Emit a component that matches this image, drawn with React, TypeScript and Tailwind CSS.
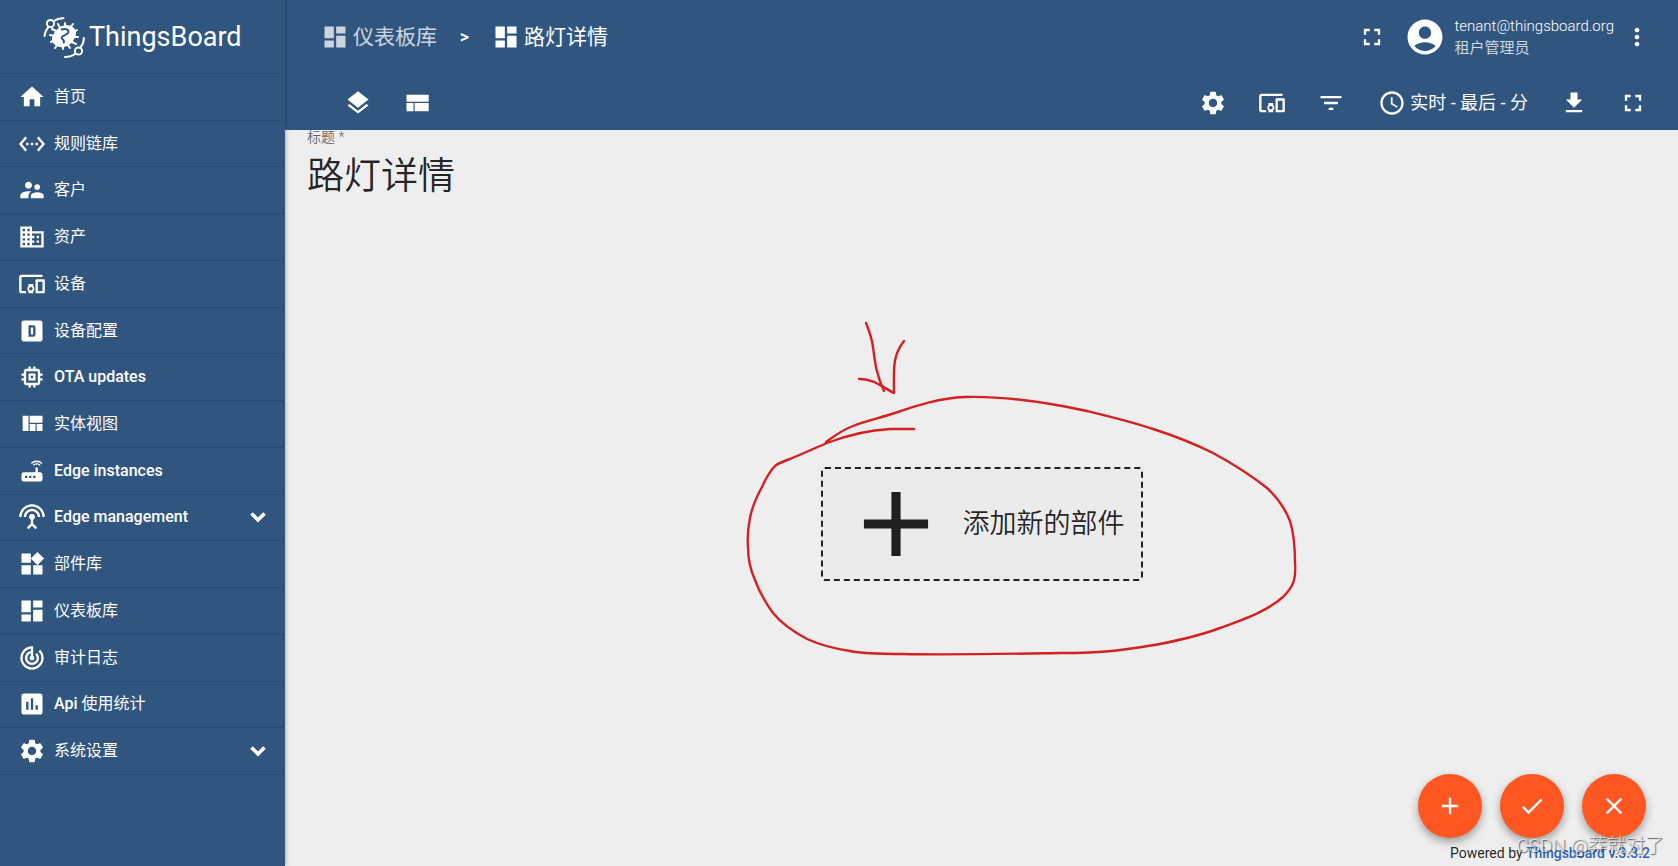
import type { ComponentType, SVGProps } from "react";
import {
  MdAccountCircle,
  MdAdd,
  MdCheck,
  MdClose,
  MdDashboard,
  MdDevicesOther,
  MdDomain,
  MdFileDownload,
  MdFilterList,
  MdFullscreen,
  MdHome,
  MdInsertChart,
  MdLayers,
  MdMemory,
  MdMoreVert,
  MdRouter,
  MdSchedule,
  MdSettings,
  MdSettingsEthernet,
  MdSettingsInputAntenna,
  MdSupervisorAccount,
  MdTrackChanges,
  MdWidgets,
} from "react-icons/md";

type Icon = ComponentType<{ className?: string }>;

const svgProps: SVGProps<SVGSVGElement> = {
  viewBox: "0 0 24 24",
  fill: "currentColor",
  "aria-hidden": true,
};

function DeviceProfileIcon({ className }: { className?: string }) {
  return (
    <svg {...svgProps} className={className}>
      <path d="M9 7v10h4a2 2 0 0 0 2-2V9a2 2 0 0 0-2-2H9m2 2h2v6h-2V9M5 3h14a2 2 0 0 1 2 2v14a2 2 0 0 1-2 2H5a2 2 0 0 1-2-2V5a2 2 0 0 1 2-2z" fillRule="evenodd" />
    </svg>
  );
}

function ViewQuiltIcon({ className }: { className?: string }) {
  return (
    <svg {...svgProps} className={className}>
      <path d="M10 18h5v-6h-5v6zm-6 0h5V5H4v13zm12 0h5v-6h-5v6zM10 5v6h11V5H10z" />
    </svg>
  );
}

function ViewCompactIcon({ className }: { className?: string }) {
  return (
    <svg {...svgProps} className={className}>
      <path d="M3 19h6v-7H3v7zm7 0h12v-7H10v7zM3 5v6h19V5H3z" />
    </svg>
  );
}

function Chevron() {
  return (
    <svg viewBox="0 0 16 12" className="h-3 w-4" fill="none" stroke="currentColor" strokeWidth="3.6" aria-hidden="true">
      <path d="M1.5 2.5 8 9l6.5-6.5" />
    </svg>
  );
}

function Logo() {
  return (
    <svg viewBox="0 0 42 42" className="size-[42px]" fill="none" stroke="currentColor" strokeWidth="2" strokeLinecap="round" aria-hidden="true">
      <circle cx="7.5" cy="7.5" r="3.6" />
      <path d="M10.5 5.2C13.5 3 17 2 20.5 2.200M5.800 10.800C3 13.500 2 17 1.500 20" />
      <circle cx="35.5" cy="35" r="3.6" />
      <path d="M32.500 37.500C29.500 40 26 41 22 41M37.200 31.800C39.500 29 41 25.500 40.800 22" />
      <path d="M23 9c5 0 10 3 10 8s-5 13-12 14-12-3-12-8S16 9 23 9z" fill="currentColor" stroke="none" />
      <path d="M17 12l-2-4M22 11V7M27 12l3-4M31 16l3-2M31 21h4M29 26l4 2M25 29l2 3M20 29v4M15 28l-3 4M12 24l-4 2M11 20l-4-1M13 15l-4-2" />
      <path d="M18.700 13.500c3-1 6.800-.5 6.800 2.500s-6.500 3-6.800 5.500 3.500 2 2 5" stroke="#305680" strokeWidth="2" />
    </svg>
  );
}

const menuItems: { label: string; icon: Icon; expandable?: boolean }[] = [
  { label: "首页", icon: MdHome },
  { label: "规则链库", icon: MdSettingsEthernet },
  { label: "客户", icon: MdSupervisorAccount },
  { label: "资产", icon: MdDomain },
  { label: "设备", icon: MdDevicesOther },
  { label: "设备配置", icon: DeviceProfileIcon },
  { label: "OTA updates", icon: MdMemory },
  { label: "实体视图", icon: ViewQuiltIcon },
  { label: "Edge instances", icon: MdRouter },
  { label: "Edge management", icon: MdSettingsInputAntenna, expandable: true },
  { label: "部件库", icon: MdWidgets },
  { label: "仪表板库", icon: MdDashboard },
  { label: "审计日志", icon: MdTrackChanges },
  { label: "Api 使用统计", icon: MdInsertChart },
  { label: "系统设置", icon: MdSettings, expandable: true },
];

// Latin words are medium, Chinese stays regular
function MenuLabel({ text }: { text: string }) {
  const latin = text.match(/^[A-Za-z ]+/)?.[0] ?? "";
  return (
    <span className="flex-1 whitespace-pre">
      {latin && <span className="font-medium">{latin}</span>}
      {text.slice(latin.length)}
    </span>
  );
}

function Sidebar() {
  return (
    <aside className="z-10 flex w-[285px] shrink-0 flex-col bg-[#305680] shadow-[1px_0_4px_rgba(0,0,0,0.25)]">
      <a href="#" className="flex h-[73px] items-center gap-1 pl-[43px]">
        <Logo />
        <span className="text-[27px] leading-8">ThingsBoard</span>
      </a>
      <nav className="grid h-[702px] auto-rows-fr border-b border-[#294c74]">
        {menuItems.map(({ label, icon: ItemIcon, expandable }) => (
          <a key={label} href="#" className="flex items-center gap-2 border-t border-[#294c74] pr-[19px] pl-[18px] text-base">
            <ItemIcon className="size-7 shrink-0" />
            <MenuLabel text={label} />
            {expandable && <Chevron />}
          </a>
        ))}
      </nav>
    </aside>
  );
}

function IconButton({ label, icon: ButtonIcon }: { label: string; icon: Icon }) {
  return (
    <button type="button" aria-label={label} className="flex w-[59px] items-center justify-center">
      <ButtonIcon className="size-7" />
    </button>
  );
}

function Header() {
  return (
    <header className="bg-[#305680]">
      <div className="flex h-[73px] items-center pr-[27px] pl-9">
        <nav className="flex items-center text-[21px] leading-7">
          <a href="#" className="flex items-center gap-1 opacity-75">
            <MdDashboard className="size-7" />
            仪表板库
          </a>
          <span className="w-[55px] text-center text-lg font-medium">&gt;</span>
          <a href="#" className="flex items-center gap-1">
            <MdDashboard className="size-7" />
            路灯详情
          </a>
        </nav>
        <div className="ml-auto flex items-center">
          <button type="button" aria-label="全屏" className="mr-[18px]">
            <MdFullscreen className="size-7" />
          </button>
          <MdAccountCircle className="size-[42px]" />
          <div className="mr-[9px] ml-2 text-[15px] leading-[22px] font-[350]">
            <div>tenant@thingsboard.org</div>
            <div className="opacity-80">租户管理员</div>
          </div>
          <button type="button" aria-label="更多">
            <MdMoreVert className="size-7" />
          </button>
        </div>
      </div>
      <div className="flex h-[57px] items-center justify-between pt-0.5 pr-4 pl-[43px]">
        <div className="flex">
          <IconButton label="仪表板状态" icon={MdLayers} />
          <IconButton label="布局" icon={ViewCompactIcon} />
        </div>
        <div className="flex items-center">
          <IconButton label="设置" icon={MdSettings} />
          <IconButton label="实体别名" icon={MdDevicesOther} />
          <IconButton label="筛选器" icon={MdFilterList} />
          <button type="button" className="mr-4 ml-[18px] flex items-center gap-1 text-lg">
            <MdSchedule className="size-7" />
            实时 - 最后 - 分
          </button>
          <IconButton label="导出" icon={MdFileDownload} />
          <IconButton label="全屏显示" icon={MdFullscreen} />
        </div>
      </div>
    </header>
  );
}

const fabs: { label: string; icon: Icon }[] = [
  { label: "添加", icon: MdAdd },
  { label: "应用更改", icon: MdCheck },
  { label: "取消更改", icon: MdClose },
];

// hand-drawn arrow and loop around the add-widget box
function Scribble() {
  return (
    <svg viewBox="662 314 640 420" className="pointer-events-none absolute top-1/2 left-1/2 h-[420px] w-[640px] -translate-x-1/2 -translate-y-1/2" fill="none" stroke="#d32121" strokeWidth="2.4" strokeLinecap="round" strokeLinejoin="round" aria-hidden="true">
      <path d="M866 323C870 333 872 339 873 347C875 362 876 374 884 391" />
      <path d="M904 341C892 356 894 370 894 393C885 389 873 378 859 379" />
      <path d="M826 442C838 433 845 429 853 426C868 420 880 418 895 413C918 405 940 398 965 397C1000 396 1045 402 1087 411C1112 417 1133 422 1153 429C1175 436 1193 443 1213 453C1235 465 1252 476 1267 488C1279 499 1286 511 1290 521C1294 534 1295 548 1295 563C1296 579 1294 586 1283 597C1266 612 1242 620 1220 628C1199 636 1180 640 1160 644C1130 649 1110 653 1060 653C1000 654 950 655 903 654C880 654 863 654 850 651C830 648 818 644 807 639C792 631 782 624 773 613C765 602 759 591 755 580C750 569 748 557 748 547C747 536 748 528 750 518C752 507 757 496 762 487C766 478 770 471 775 466C779 463 784 461 790 459C802 454 815 448 827 443C848 435 870 430 890 429H914" />
    </svg>
  );
}

export default function App() {
  return (
    <div className="flex min-h-screen bg-[#eeeeee] font-['Roboto','Noto_Sans_CJK_SC',sans-serif] text-white">
      <Sidebar />
      <div className="flex min-w-0 flex-1 flex-col">
        <Header />
        <main className="relative flex flex-1 flex-col text-black/87">
          <div className="flex h-[72px] flex-col px-[22px]">
            <label htmlFor="title" className="text-sm leading-[14px] font-[350] text-black/60">标题 *</label>
            <input id="title" defaultValue="路灯详情" className="h-[58px] w-full bg-transparent text-[37px] font-[350] outline-none" />
          </div>
          <div className="relative flex flex-1 items-center justify-center">
            <button type="button" className="flex h-[114px] items-center gap-3 rounded border-2 border-dashed border-[#212121] bg-[#ebebeb] pr-4 pl-[18px] text-[27px] font-[350]">
              <MdAdd className="size-[110px]" />
              添加新的部件
            </button>
            <Scribble />
          </div>
          <footer className="h-5 pr-7 text-right text-sm leading-[14px]">
            Powered by <a href="#" className="font-medium text-[#2a66bd]">Thingsboard v.3.3.2</a>
          </footer>
          <div className="absolute right-8 bottom-7 flex gap-[18px]">
            {fabs.map(({ label, icon: FabIcon }) => (
              <button key={label} type="button" aria-label={label} className="flex size-16 items-center justify-center rounded-full bg-[#ff5722] text-white shadow-[0_4px_8px_rgba(0,0,0,0.35)]">
                <FabIcon className="size-7" />
              </button>
            ))}
          </div>
          <div className="pointer-events-none absolute right-[14px] bottom-2 text-[19px] leading-6 font-light text-[#eeeeee]/80 [text-shadow:1px_1px_1px_rgba(0,0,0,0.6)]">CSDN @莽就对了</div>
        </main>
      </div>
    </div>
  );
}
